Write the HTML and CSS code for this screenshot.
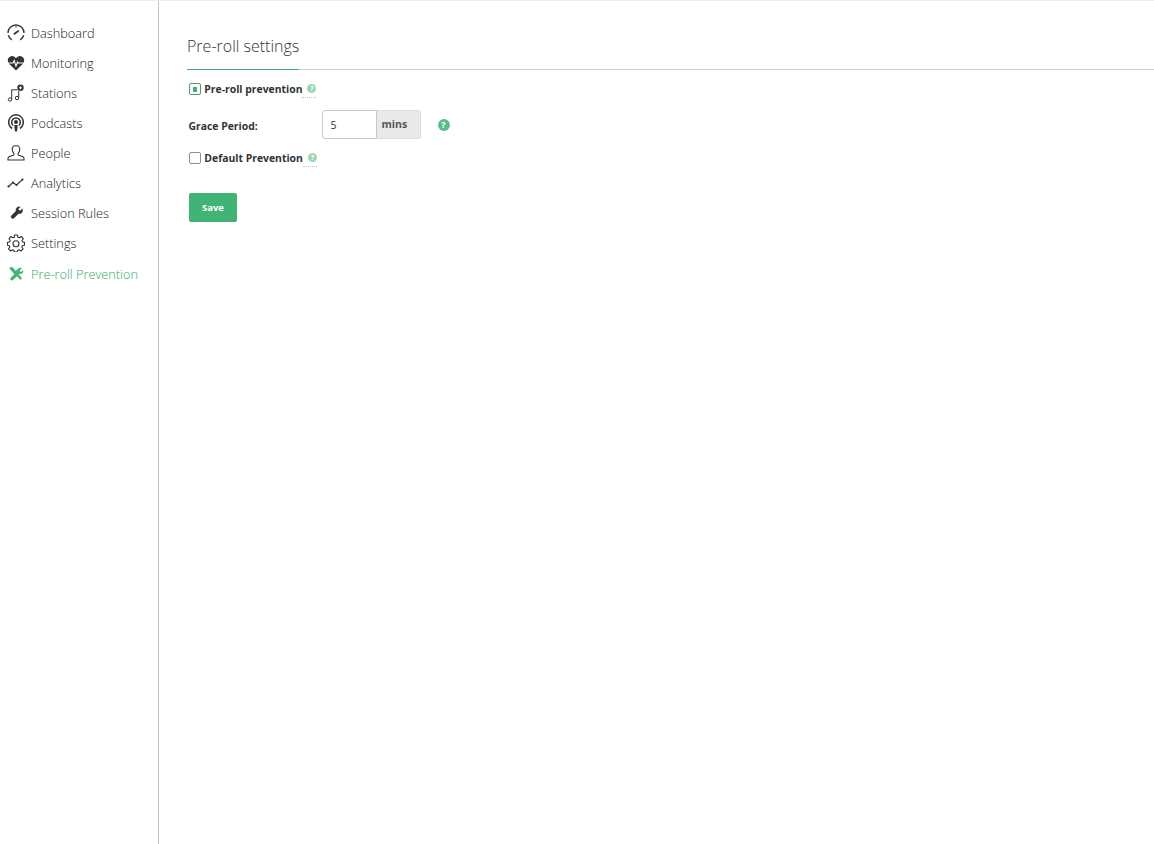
FILE: index.html
```html
<!DOCTYPE html>
<html lang="en">
<head>
<meta charset="utf-8">
<title>Pre-roll settings</title>
<link rel="stylesheet" href="styles.css">
</head>
<body>
<div class="topline"></div>
<div class="app">
  <nav class="sidebar">
    <a class="nav-item"><svg class="nav-icon" viewBox="0 0 18 18"><g fill="none" stroke="#333" stroke-width="1.400"><path d="M1 9A8 8 0 0 1 17 9"/><path d="M1.300 11.200A8 8 0 0 0 4.800 15.800"/><path d="M16.700 11.200A8 8 0 0 1 13.200 15.800"/></g><path d="M6.800 10.300L11.700 6.800" stroke="#333" stroke-width="1.700" fill="none"/><path d="M9 2.200v1.500" stroke="#333"/></svg><span>Dashboard</span></a>
    <a class="nav-item"><svg class="nav-icon" viewBox="0 0 18 18"><path d="M9 16.500L2 9.800C-.6 6.800 1.200 2 5 2c1.800 0 3.100 1 4 2.300C9.900 3 11.200 2 13 2c3.800 0 5.600 4.800 3 7.800z" fill="#333"/><path d="M1 9h5l1.200-2.500L9 12l1.500-4 .8 1H17" fill="none" stroke="#fff" stroke-width="1.100"/></svg><span>Monitoring</span></a>
    <a class="nav-item"><svg class="nav-icon" viewBox="0 0 18 18"><g fill="none" stroke="#333" stroke-width="1"><circle cx="3" cy="15.500" r="1.700"/><circle cx="10" cy="14" r="1.700"/><path d="M4.700 15.500V5.800H10.500M11.700 14V7"/></g><circle cx="13.500" cy="3.800" r="3.200" fill="#333"/><path d="M13.500 2.300v3M12 3.800h3" stroke="#fff"/></svg><span>Stations</span></a>
    <a class="nav-item"><svg class="nav-icon" viewBox="0 0 18 18"><g fill="none" stroke="#333"><path d="M5.200 14.500A7.400 7.400 0 1 1 12.800 14.500" stroke-width="1.500"/><path d="M6.200 11.500A4.300 4.300 0 1 1 11.800 11.500" stroke-width="1.500"/></g><circle cx="9" cy="8" r="2" fill="#333"/><path d="M7.300 11h3.400l-.6 6.500H7.900z" fill="#333"/></svg><span>Podcasts</span></a>
    <a class="nav-item"><svg class="nav-icon" viewBox="0 0 18 18"><path d="M9 1.500c-2.400 0-3.800 1.800-3.800 4 0 1.700.8 3 1.700 4 .4.700.1 1.400-.6 1.700l-3.800 1.300C1.400 13 1 13.700 1 14.500V16h16v-1.500c0-.8-.4-1.500-1.500-2L11.700 11.200c-.7-.3-1-1-.6-1.700.9-1 1.700-2.300 1.700-4 0-2.200-1.400-4-3.800-4z" fill="none" stroke="#333" stroke-width="1.100"/></svg><span>People</span></a>
    <a class="nav-item"><svg class="nav-icon" viewBox="0 0 18 18"><path d="M1.500 12.500L6 8.500l3.500 2.500 6-5.500" fill="none" stroke="#333" stroke-width="1.100"/><g fill="#333"><circle cx="1.500" cy="12.500" r="1.100"/><circle cx="6" cy="8.500" r="1.100"/><circle cx="9.500" cy="11" r="1.100"/><circle cx="15.500" cy="5.500" r="1.100"/></g></svg><span>Analytics</span></a>
    <a class="nav-item"><svg class="nav-icon" viewBox="0 0 18 18"><path d="M15.500 3.300l-2.500 2.300-1.800-.4-.5-1.700L13 1.200C11 .6 8.500 1.500 8 4c-.2.800-.1 1.500.1 2.100L2.800 11.300c-.9.900-.9 2.100 0 2.900.8.800 2 .8 2.900 0L11 9c.6.200 1.300.2 2 .1 2.400-.5 3.300-3.500 2.500-5.800z" fill="#333" stroke="#333" stroke-width=".5" transform="translate(2.300 2) scale(.84)"/></svg><span>Session Rules</span></a>
    <a class="nav-item"><svg class="nav-icon" viewBox="0 0 18 18"><path d="M7.500 1h3l.4 2.200 1.400.6 1.900-1.300 2.100 2.100-1.300 1.900.6 1.400L17.500 8.300v2.900l-2.100.4-.6 1.400 1.300 1.900-2.100 2.100-1.900-1.300-1.400.6-.4 1.700h-3l-.4-1.700-1.400-.6-1.900 1.300-2.100-2.100 1.300-1.900-.6-1.400L.5 11.200V8.300l2.200-.4.6-1.400L2 4.600l2.100-2.100L6 3.800l1.400-.6z" fill="none" stroke="#333" stroke-width="1.100" stroke-linejoin="round"/><circle cx="9" cy="9.700" r="3" fill="none" stroke="#333" stroke-width="1.100"/></svg><span>Settings</span></a>
    <a class="nav-item active"><svg class="nav-icon" viewBox="0 0 18 18"><path d="M4.500 1l3.800 4.800 3.200-3c1.100-1.200 3.200-1.100 4.300-.2l-2.600 2.300.5 1.700 1.800.4 2-2c.4 1.800-.4 3.600-2.500 4-.7.100-1.200 0-1.700-.2l-1.300 1.200 4 4.600-1.800 1.800-4.300-4.500L5 16.500c-.8.800-2 .8-2.700 0-.7-.8-.6-1.800.1-2.500L7 9.700 2.500 4.300 1.800 4 1 1.800 2 1z" fill="#41b375" stroke="#41b375" stroke-width=".6" transform="translate(2 1.500) scale(.8)"/></svg><span>Pre-roll Prevention</span></a>
  </nav>
  <main class="content">
    <h1 class="title"><span class="title-text">Pre-roll settings</span></h1>
    <div class="field field-check">
      <label class="check-label"><span class="check checked"><span class="check-dot"></span></span><b>Pre-roll prevention</b></label>
      <span class="help-wrap"><span class="help help-light">?</span></span>
    </div>
    <div class="field field-grace">
      <label class="grace-label">Grace Period:</label>
      <div class="input-group"><span class="input">5</span><span class="addon">mins</span></div>
      <span class="help help-large">?</span>
    </div>
    <div class="field field-check field-default">
      <label class="check-label"><span class="check"></span><b>Default Prevention</b></label>
      <span class="help-wrap"><span class="help help-light">?</span></span>
    </div>
    <button class="save" type="button">Save</button>
  </main>
</div>
</body>
</html>
```

FILE: styles.css
```css
* { box-sizing: border-box; }
html, body { margin: 0; padding: 0; height: 100%; }
body {
  font-family: "Open Sans", "Liberation Sans", sans-serif;
  color: #333;
  background: #fff;
  overflow: hidden;
}
.topline { height: 1px; background: #eeeeee; }
.app { display: flex; height: 843px; }
.sidebar {
  width: 159px;
  flex: none;
  border-right: 1px solid #c4c4c4;
  padding-top: 17px;
  display: flex;
  flex-direction: column;
}
.nav-item {
  display: flex;
  align-items: center;
  height: 30px;
  padding-left: 7px;
  font-size: 12.750px;
  font-weight: 300;
  color: #222;
  gap: 6px;
}
.nav-item.active { color: #2faa68; margin-top: 1px; }
.nav-icon { width: 18px; height: 18px; flex: none; }
.content { flex: 1; padding: 0 0 0 28px; }
.title {
  margin: 0;
  height: 69px;
  padding-top: 34px;
  border-bottom: 1px solid #cccccc;
  font-size: 16px;
  line-height: 22px;
  font-weight: 300;
  color: #333;
}
.title-text {
  display: inline-block;
  height: 35px;
  border-bottom: 1px solid #41a873;
}
.field { display: flex; align-items: center; margin-left: 2px; }
.field-check { height: 16px; margin-top: 11px; }
.field-default { margin-top: 12px; }
.check-label { display: flex; align-items: center; font-size: 10.400px; }
.check-label b { font-weight: 700; margin-left: .3px; }
.check {
  width: 12px;
  height: 12px;
  border: 1px solid #8e8e8e;
  border-radius: 2px;
  margin-right: 3px;
  display: flex;
  align-items: center;
  justify-content: center;
  background: #fff;
}
.check.checked { border-color: #5c8f78; }
.check-dot { width: 4px; height: 5px; background: #41b375; }
.help-wrap {
  display: flex;
  align-items: center;
  height: 17px;
  padding-left: 5px;
  border-bottom: 1px dotted #c4c4c4;
}
.help {
  display: inline-block;
  text-align: center;
  border-radius: 50%;
  color: #fff;
  font-weight: 700;
}
.help-light {
  width: 9px;
  height: 9px;
  font-size: 7px;
  line-height: 9px;
  background: #9ad6b6;
}
.help-large {
  width: 12px;
  height: 12px;
  font-size: 9px;
  line-height: 12px;
  margin: 2px 0 0 17px;
  background: #5fbd8c;
}
.field-grace { margin-top: 13px; height: 28px; }
.grace-label { width: 133px; margin: 4px 0 0 -.5px; font-size: 10.400px; font-weight: 700; }
.input-group { display: flex; height: 29px; }
.input {
  width: 55px;
  border: 1px solid #c8c8c8;
  border-radius: 3px 0 0 3px;
  font-size: 10.500px;
  line-height: 28px;
  padding-left: 8px;
  background: #fff;
}
.addon {
  width: 44px;
  background: #e9e9e9;
  border: 1px solid #dddddd;
  border-left: 0;
  border-radius: 0 3px 3px 0;
  font-size: 10.500px;
  font-weight: 700;
  line-height: 26px;
  padding-left: 5px;
  color: #555;
}
.save {
  display: block;
  margin: 27px 0 0 2px;
  width: 48px;
  height: 29px;
  border: 0;
  border-radius: 2px;
  background: #41b375;
  color: #fff;
  font-family: inherit;
  font-size: 9.500px;
  font-weight: 700;
  padding: 0;
}
```
